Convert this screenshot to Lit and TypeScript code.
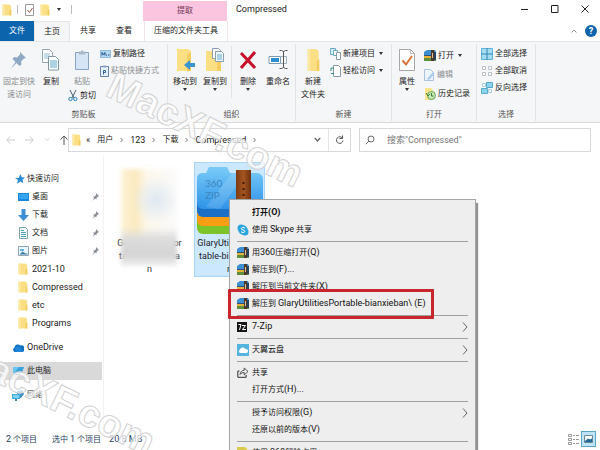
import { LitElement, html, svg, css, TemplateResult } from "lit";
import { customElement } from "lit/decorators.js";
import { classMap } from "lit/directives/class-map.js";

/* Latin runs are set one size larger than the Chinese characters around them. */
const mix = (text: string) =>
  text
    .split(/([\x21-\x7e]+(?: [\x21-\x7e]+)*)/)
    .map((part) => (/^[\x21-\x7e]/.test(part) ? html`<span class="en">${part}</span>` : part));

const icon = (w: number, h: number, body: unknown) =>
  html`<svg width=${w} height=${h} viewBox="0 0 ${w} ${h}" aria-hidden="true">${body}</svg>`;

const folder = (w: number, h: number) => html`<svg width=${w} height=${h} viewBox="0 0 10 12" preserveAspectRatio="none" aria-hidden="true">
  <path d="M0.5 0.5h6.5l2 1v10h-8.5z" fill="#fbdf85" />
  <path d="M7.5 6.5l2-1v6h-2z" fill="#f3cd62" />
  <path d="M0.5 0.5h2v11h-2z" fill="#fde9a6" />
</svg>`;

const I = {
  doc: () => icon(10, 12, svg`<path d="M.5.5h8v11h-8z" fill="#fff" stroke="#9a9a9a"/><path d="M2.5 6l2 2.500 3-4.500" fill="none" stroke="#a9573f"/>`),
  pin: () => icon(20, 22, svg`<path d="M11 3l6 6-2 .5-3 3 .5 3-2 1.500-3-3-6 6 5-7-3-3 1.500-2 3 .5 3-3z" fill="#8fa9c4"/>`),
  copy: () => icon(18, 22, svg`<path d="M.5.5h7l3 3v10h-10z" fill="#fff" stroke="#93a9b5"/><path d="M2 5h6M2 7h6M2 9h5" stroke="#8fc0d6"/><path d="M6.500 7.500h7l3 3v10.500h-10z" fill="#fff" stroke="#7f98a6"/><path d="M8 12h7M8 14h7M8 16h7M8 18h7" stroke="#5ba9cb"/>`),
  paste: () => icon(16, 22, svg`<path d="M1.500 3.500h13v17h-13z" fill="#d6e5f5" stroke="#88a3c4"/><path d="M5 2.500h2l1-2 1 2h2v3h-6z" fill="#a9b7c8"/>`),
  cut: () => icon(10, 12, svg`<path d="M2 0l4 8M8 0L4 8" stroke="#4b5f72"/><circle cx="2.500" cy="9" r="1.700" fill="none" stroke="#2b85bd"/><circle cx="7.300" cy="9" r="1.700" fill="none" stroke="#2b85bd"/>`),
  path: () => icon(11, 8, svg`<path d="M.5.5h10v7h-10z" fill="#b7daf3" stroke="#8fbbdd"/><path d="M2 5.500v-3l1.500 2 1.500-2v3M6 5h1M8 5h1.500" stroke="#1d4f84" fill="none"/>`),
  shortcut: () => icon(9, 12, svg`<path d="M.5 1.500h8v10h-8z" fill="#e7f0fa" stroke="#6586b0"/><path d="M3 .5h3v2H3z" fill="#8fa4c0"/><path d="M3.500 9.500V5.500h2v2h-2" fill="none" stroke="#2f66a8"/>`),
  move: () => icon(20, 24, svg`<path d="M2 1h11l3 2v20H2z" fill="#fbdf85"/><path d="M12 6l4-2v19h-4z" fill="#f3cd62"/><path d="M9 17l6-5v3h5v4h-5v3z" fill="#3b93cf"/>`),
  copyTo: () => icon(20, 24, svg`<path d="M1 3h12l3 2v18H1z" fill="#fbdf85"/><path d="M12 8l4-2v17h-4z" fill="#f3cd62"/><path d="M7.500.5h6l2 2v8h-8z" fill="#fff" stroke="#8a9fae"/><path d="M10.500 3.500h6l2 2v8h-8z" fill="#eef6fb" stroke="#8a9fae"/><path d="M12 7h5M12 9h5M12 11h5" stroke="#68add0"/>`),
  del: () => icon(18, 20, svg`<path d="M2 3l14 15M16 2L2 18" stroke="#c8102a" stroke-width="3" fill="none"/>`),
  rename: () => icon(20, 20, svg`<path d="M1 6.500h11.500v7H1z" fill="#fff" stroke="#7f9bb0"/><path d="M3 8h8v4H3z" fill="#2f8fd0"/><path d="M12 6.500h6.500v7H12" fill="none" stroke="#9db2c0"/><path d="M11.500.500h2l2 1 2-1h2M11.500 18.500h2l2-1 2 1h2M15.500 1.500v16" fill="none" stroke="#555"/>`),
  newItem: () => icon(11, 12, svg`<path d="M.5.5h5v6h-5z" fill="#d4effa" stroke="#6ba6bf"/><path d="M3.500 2.500h4v5h-4z" fill="#fff" stroke="#6ba6bf"/><path d="M6.500 4.500h4v7h-4z" fill="#fff" stroke="#8a9aa5"/>`),
  easy: () => icon(11, 12, svg`<path d="M3.500.5h5l2 2v9h-7z" fill="#fff" stroke="#8a9aa5"/><path d="M1 6V3h3" fill="none" stroke="#338f86"/><path d="M1 8.500h3" stroke="#338f86"/>`),
  props: () => icon(16, 22, svg`<path d="M.5.5h11l4 4v17H.5z" fill="#fff" stroke="#a7a7a7"/><path d="M11.500.5v4h4" fill="none" stroke="#b7b7b7"/><path d="M3.500 11.500l3.500 4 6-8.500" fill="none" stroke="#d9743a" stroke-width="2"/>`),
  zip: () => icon(12, 11, svg`<path d="M0 2l3-2h8l1 2v4H0z" fill="#3c8fd0"/><path d="M0 5h12v2H0z" fill="#2b527c"/><path d="M0 6h12v3H0z" fill="#e7b23a"/><path d="M0 8h12v3H0z" fill="#5f8f3c"/><path d="M7 0h3v11H7z" fill="#4d3a2c"/><path d="M8 3h1v5H8z" fill="#d9c39a"/><path d="M10 2h2v8h-2z" fill="#27445f"/>`),
  edit: () => icon(11, 12, svg`<path d="M.5.5h6l3 3v8h-9z" fill="#eef4fb" stroke="#a9c3dc"/><path d="M3 10l6-7 1.500 1.500L5 11z" fill="#a8c9ea"/>`),
  history: () => icon(12, 12, svg`<path d="M1 0h6l2 2v10H1z" fill="#f7e38b"/><circle cx="7.500" cy="7.500" r="4" fill="#c9e7bd" stroke="#63a551"/><path d="M7.500 5v3h2M2 5l2 3 2-2" fill="none" stroke="#3d7f32"/>`),
  selAll: () => icon(12, 12, svg`<path d="M.5.5h11v11H.5z" fill="#a5dcf3" stroke="#5db4d8"/><path d="M6 0v12M0 6h12" stroke="#3589b0"/>`),
  selNone: () => icon(12, 12, svg`<path d="M1.500 1.500h3v3h-3zM7.500 1.500h3v3h-3zM1.500 7.500h3v3h-3zM7.500 7.500h3v3h-3z" fill="#fff" stroke="#b9bfc4"/>`),
  selInv: () => icon(12, 12, svg`<path d="M1.500 1.500h3v3h-3zM7.500 7.500h3v3h-3z" fill="#fff" stroke="#a9cfe0"/><path d="M5.500.5h6v5h-6zM.5 6.500h6v5h-6z" fill="#8bd2ee" stroke="#5aabc9"/>`),
  star: () => icon(10, 10, svg`<path d="M5.500 0l1.300 3.200 3.200.3-2.500 2.200.8 3.600-3-1.800L2 9.800l1-3.700L0 4.200l3.800-.5z" fill="#2a8bd8"/>`),
  desktop: () => icon(11, 10, svg`<path d="M0 1h11v8H0z" fill="#1a86dc"/><path d="M1 2h9v5H1z" fill="#35a5f2"/>`),
  down: () => icon(11, 12, svg`<path d="M3.500 0h4v6H11L5.500 12 0 6h3.500z" fill="#3d8fd6"/>`),
  docs: () => icon(11, 12, svg`<path d="M1.500.5h6l2 2v9h-8z" fill="#f1f9fb" stroke="#7da4ad"/><path d="M3 3.500h3M3 5.500h5M3 7.500h5M3 9.500h5" stroke="#4f9fb5"/>`),
  pics: () => icon(11, 10, svg`<path d="M.5.5h10v9H.5z" fill="#e9f5fb" stroke="#8fa5b0"/><path d="M1.500 8.500l3-3 3 2h2v1z" fill="#3a7fa5"/><path d="M2 3h4v2H2z" fill="#66b2dc"/>`),
  cloud: () => icon(12, 9, svg`<path d="M2.500 9a2.500 2.500 0 0 1 0-4.500A3.500 3.500 0 0 1 8.500 2.500 3 3 0 0 1 10 9z" fill="#1272c8"/><path d="M4 9l-1-4 3-2 3 2 1 4z" fill="#2a9ae6" opacity=".5"/>`),
  pc: () => icon(12, 10, svg`<path d="M1 1h11l-2 6H1z" fill="#3aa3dd"/><path d="M1 1h6L2 7H1z" fill="#6cc4ef"/><path d="M3 8h5v1H3z" fill="#4d7f9d"/>`),
  net: () => icon(12, 11, svg`<path d="M5 1l5-1 2 4-3 4H5z" fill="#3d8fc4"/><path d="M0 4h8v5H0z" fill="#45aee3"/><path d="M1 5h6v3H1z" fill="#7ccff2"/><path d="M3 9h2v2H3z" fill="#4d7f9d"/>`),
  tack: () => icon(7, 8, svg`<path d="M4 0l3 3-1 .5-1.500 1.500v1.500L3 5.500.5 8l1.500-3L1 3.500h1.500L4 2z" fill="#8a9097"/>`),
  skype: () => icon(12, 12, svg`<circle cx="4" cy="4" r="3.500" fill="#2aa5de"/><circle cx="8" cy="8" r="3.500" fill="#2aa5de"/><circle cx="6" cy="6" r="4.700" fill="#2aa5de"/><path d="M8 4.300C7 3 4.200 3.300 4.300 4.700 4.400 6.300 7.800 5.600 7.800 7.300 7.700 8.900 5 8.900 4 7.600" fill="none" stroke="#fff"/>`),
  seven: () => icon(10, 10, svg`<path d="M0 0h10v10H0z" fill="#151515"/><path d="M1.500 2.500h2.500L2.500 8M5 3.500h3.500L5.500 7.500h3.500" fill="none" stroke="#fff"/>`),
  tianyi: () => icon(12, 12, svg`<path d="M0 0h12v12H0z" fill="#55b4dd"/><path d="M3 9a2 2 0 0 1 0-3.500 3 3 0 0 1 5.500-.5A2 2 0 0 1 9.500 9z" fill="#fff"/>`),
  share: () => icon(12, 11, svg`<path d="M2.500 4H.8v6.300h8.400V8" fill="none" stroke="#333"/><path d="M3 7.500C3.500 4.500 5 3.500 7.200 3.300V1l3.800 3.500L7.200 8V5.500C5.500 5.500 4 6 3 7.500z" fill="none" stroke="#333" stroke-width=".8"/>`),
  note: () => icon(11, 11, svg`<path d="M0 0h8l3 3v8H0z" fill="#d9cb4d"/><path d="M2 4h6v7H2z" fill="#f4f0c0"/>`),
  chev: () => icon(6, 10, svg`<path d="M1 .5L5 5 1 9.500" fill="none" stroke="#666"/>`),
  sep: () => icon(3, 6, svg`<path d="M.5 1l2 2-2 2" fill="none" stroke="#777"/>`),
  back: () => icon(9, 8, svg`<path d="M9 4H1M4 .5L.8 4 4 7.500" fill="none" stroke="#c4c8cc"/>`),
  fwd: () => icon(9, 8, svg`<path d="M0 4h8M5 .5L8.200 4 5 7.500" fill="none" stroke="#c4c8cc"/>`),
  up: () => icon(8, 10, svg`<path d="M4 10V1M.5 4.500L4 1l3.500 3.500" fill="none" stroke="#555"/>`),
  small: () => icon(6, 4, svg`<path d="M1 .5l2 2 2-2" fill="none" stroke="#c4c8cc"/>`),
  drop: () => icon(7, 6, svg`<path d="M.8 1l2.700 3L6.200 1" fill="none" stroke="#666" stroke-width="1.300"/>`),
  refresh: () => icon(9, 10, svg`<path d="M7.300 3A3.300 3.300 0 1 0 8 5.500M7.500.5v3h-3" fill="none" stroke="#555"/>`),
  search: () => icon(10, 10, svg`<circle cx="6" cy="4" r="3" fill="none" stroke="#666"/><path d="M3.800 6.200L.8 9.200" stroke="#666"/>`),
  list: () => icon(11, 11, svg`<path d="M.5.5h3v2h-3zM.5 4.500h3v2h-3zM.5 8.500h3v2h-3z" fill="#fff" stroke="#999"/><path d="M5 1.500h2M8 1.500h3M5 5.500h2M8 5.500h3M5 9.500h2M8 9.500h3" stroke="#999"/>`),
  large: () => icon(9, 8, svg`<path d="M.5.5h8v7h-8z" fill="#fff" stroke="#6a8797"/><path d="M1 6l3-2.500 2 1 2-1V7H1z" fill="#1f6b95"/>`),
};

const caret = html`<i class="caret"></i>`;

type Entry = { sep?: boolean; label?: string; icon?: () => TemplateResult; more?: boolean; bold?: boolean };

const MENU: Entry[] = [
  { label: "打开(O)", bold: true },
  { label: "使用 Skype 共享", icon: I.skype },
  { sep: true },
  { label: "用360压缩打开(Q)", icon: I.zip },
  { label: "解压到(F)...", icon: I.zip },
  { label: "解压到当前文件夹(X)", icon: I.zip },
  { label: "解压到 GlaryUtilitiesPortable-bianxieban\\ (E)", icon: I.zip },
  { sep: true },
  { label: "7-Zip", icon: I.seven, more: true },
  { sep: true },
  { label: "天翼云盘", icon: I.tianyi, more: true },
  { sep: true },
  { label: "共享", icon: I.share },
  { label: "打开方式(H)..." },
  { sep: true },
  { label: "授予访问权限(G)", more: true },
  { label: "还原以前的版本(V)" },
  { sep: true },
  { label: "使用 360解除占用", icon: I.note },
];

const base = css`
  * { box-sizing: border-box; }
  button, input {
    font: inherit; color: inherit; background: none; border: 0; padding: 0; margin: 0;
  }
  button { display: flex; align-items: center; white-space: nowrap; }
  svg { display: block; flex: none; }
  .en { font-size: 9px; }
  .caret {
    border: 2px solid transparent; border-top: 3px solid #333; border-bottom: 0; flex: none;
  }
`;

@customElement("ribbon-bar")
export class RibbonBar extends LitElement {
  static styles = [base, css`
    :host {
      display: flex; height: 82px; background: #f5f6f7;
      border-top: 1px solid #e3e5e7; border-bottom: 1px solid #dadbdc;
    }
    .group {
      display: flex; flex-direction: column; flex: none; margin: 2px 0 1px;
      border-right: 1px solid #e1e3e5;
    }
    .body { display: flex; flex: 1; }
    .name { text-align: center; height: 13px; line-height: 13px; color: #555; }
    .tall { flex-direction: column; width: 30px; padding-top: 4px; height: 62px; line-height: 13px; text-align: center; }
    .tall svg { height: 24px; }
    .tall .text { margin-top: 3px; }
    .dim { color: #8a8d91; }
    .wide { width: 34px; }
    .side { display: flex; flex-direction: column; align-items: center; width: 32px; }
    .side .tall { height: 46px; }
    .list { display: flex; flex-direction: column; padding: 1px 6px 0 2px; }
    .list button { height: 17px; gap: 2px; }
    .list .caret { margin-left: 2px; }
    .loose { padding-top: 2px; }
    .loose button { height: 19px; }
    .cut { gap: 2px; height: 12px; }
    .rule { width: 1px; height: 52px; margin: 2px 1px 0; background: #e1e3e5; }
    .pad { padding: 0 2px; }
  `];

  private tall(ic: unknown, text: unknown, cls = "", arrow = false) {
    return html`<button class="tall ${cls}">${ic}<span class="text">${text}</span>${arrow ? caret : ""}</button>`;
  }

  private row(ic: unknown, text: string, arrow = false, dim = false) {
    return html`<button class=${classMap({ dim })}>${ic}<span>${text}</span>${arrow ? caret : ""}</button>`;
  }

  render() {
    return html`
      <section class="group">
        <div class="body pad">
          ${this.tall(I.pin(), html`固定到快<br />速访问`, "dim wide")}
          ${this.tall(I.copy(), "复制")}
          <div class="side">
            ${this.tall(I.paste(), "粘贴", "dim")}
            <button class="cut">${I.cut()}<span>剪切</span></button>
          </div>
          <div class="list">
            ${this.row(I.path(), "复制路径")}
            ${this.row(I.shortcut(), "粘贴快捷方式", false, true)}
          </div>
        </div>
        <div class="name">剪贴板</div>
      </section>
      <section class="group">
        <div class="body pad">
          ${this.tall(I.move(), "移动到", "", true)}
          ${this.tall(I.copyTo(), "复制到", "", true)}
          <div class="rule"></div>
          ${this.tall(I.del(), "删除", "", true)}
          ${this.tall(I.rename(), "重命名")}
        </div>
        <div class="name">组织</div>
      </section>
      <section class="group">
        <div class="body pad">
          ${this.tall(folder(13, 20), html`新建<br />文件夹`)}
          <div class="list">
            ${this.row(I.newItem(), "新建项目", true)}
            ${this.row(I.easy(), "轻松访问", true)}
          </div>
        </div>
        <div class="name">新建</div>
      </section>
      <section class="group">
        <div class="body">
          ${this.tall(I.props(), "属性", "", true)}
          <div class="list loose">
            ${this.row(I.zip(), "打开", true)}
            ${this.row(I.edit(), "编辑", false, true)}
            ${this.row(I.history(), "历史记录")}
          </div>
        </div>
        <div class="name">打开</div>
      </section>
      <section class="group">
        <div class="body pad">
          <div class="list">
            ${this.row(I.selAll(), "全部选择")}
            ${this.row(I.selNone(), "全部取消")}
            ${this.row(I.selInv(), "反向选择")}
          </div>
        </div>
        <div class="name">选择</div>
      </section>
    `;
  }
}

@customElement("context-menu")
export class ContextMenu extends LitElement {
  static styles = [base, css`
    :host {
      display: block; padding: 4px 7px; background: #eee; border: 1px solid #a5a5a5;
      box-shadow: 2px 4px 1px #0000006b; color: #111;
    }
    .item { width: 100%; height: 17px; }
    .icon { width: 15px; }
    .text { flex: 1; text-align: left; }
    .bold { font-weight: 700; }
    hr { height: 1px; border: 0; background: #a0a0a0; margin: 3px 0 2px; }
  `];

  render() {
    return MENU.map((e) =>
      e.sep
        ? html`<hr />`
        : html`<button class="item" role="menuitem">
            <span class="icon">${e.icon ? e.icon() : ""}</span>
            <span class="text ${classMap({ bold: !!e.bold })}">${mix(e.label!)}</span>
            ${e.more ? I.chev() : ""}
          </button>`
    );
  }
}

@customElement("app-root")
export class AppRoot extends LitElement {
  static styles = [base, css`
    :host {
      display: flex; flex-direction: column; position: relative; min-height: 100vh; height: 100vh;
      overflow: hidden; background: #fff; color: #222;
      font: 8px/12px Roboto, "Noto Sans CJK SC", sans-serif;
    }
    .title { display: flex; height: 21px; flex: none; }
    .quick { display: flex; align-items: center; width: 143px; padding: 0 2px 2px; }
    .quick .gap { width: 1px; height: 9px; background: #bbb; margin: 0 7px 0 5px; }
    .quick .caret { margin: 0 5px 0 7px; }
    .quick button + button { margin-left: 5px; }
    .extract { width: 84px; margin-top: 1px; background: #fcc5df; text-align: center; line-height: 20px; color: #6f3654; }
    .name { flex: 1; padding-left: 9px; line-height: 19px; font-size: 9px; font-weight: 400; margin: 0; }
    .win { display: flex; }
    .win button { width: 30px; justify-content: center; padding-bottom: 3px; }
    .tabs { display: flex; height: 20px; flex: none; align-items: stretch; }
    .tabs button { width: 36px; justify-content: center; }
    .tabs .file { width: 34px; background: #0c64ad; color: #fff; }
    .tabs .on { background: #f5f6f7; border: 1px solid #e3e5e7; border-bottom: 0; }
    .tabs .tool { width: 84px; margin-left: 2px; border: 1px solid #f1e4ea; border-width: 0 1px; }
    .tabs .right { display: flex; margin-left: auto; align-items: center; gap: 8px; padding-right: 3px; }
    .tabs .right button { width: auto; }
    .tabs .right .help { width: 12px; height: 12px; border-radius: 50%; background: #1164ab; color: #fff; font-size: 9px; font-weight: 700; }
    .bar { display: flex; flex: none; align-items: center; height: 33px; padding: 0 9px 0 6px; }
    .nav { display: flex; align-items: center; width: 62px; gap: 10px; }
    .address { display: flex; flex: 1; height: 24px; border: 1px solid #d9d9d9; align-items: center; padding-left: 3px; }
    .crumbs { display: flex; align-items: center; gap: 7px; flex: 1; padding-left: 5px; }
    .address .go { width: 22px; height: 22px; justify-content: center; border-left: 1px solid #e4e4e4; }
    .address .open { margin-right: 7px; }
    .find { display: flex; align-items: center; width: 232px; height: 24px; border: 1px solid #d9d9d9; margin-left: 8px; padding-left: 5px; gap: 12px; }
    .find input { flex: 1; min-width: 0; font-size: 9px; outline: 0; }
    .find input::placeholder { color: #777; opacity: 1; }
    .main { display: flex; flex: 1; min-height: 0; }
    .tree { width: 104px; padding-top: 14px; border-right: 1px solid #f3f3f3; flex: none; }
    .tree a { display: flex; align-items: center; height: 18px; padding-left: 15px; color: inherit; text-decoration: none; }
    .tree .icon { width: 12px; }
    .tree .sub { padding-left: 18px; }
    .tree .sub .icon { width: 14px; display: flex; justify-content: flex-start; }
    .tree .top { margin-top: 6px; padding-left: 12px; }
    .tree .top .icon { width: 15px; }
    .tree .here { background: #d9d9d9; margin-right: 1px; }
    .tree .text { flex: 1; }
    .tree .tack { margin-right: 4px; }
    .files { display: flex; align-items: flex-start; gap: 9px; padding: 6px 0 0 10px; }
    .file-item { display: flex; flex-direction: column; align-items: center; width: 71px; height: 115px; padding-top: 3px; position: relative; }
    .picked { background: #cce8ff; border: 1px solid #a9d6f8; }
    .thumb { height: 72px; }
    .caption { font-size: 9px; line-height: 13px; text-align: center; white-space: nowrap; }
    .smudge {
      position: absolute; left: 7px; top: 7px; width: 56px; height: 97px; filter: blur(2px);
      background:
        linear-gradient(#fff0 60%, #dcdcdc 72%, #d4d4d4 88%, #efefef),
        radial-gradient(circle at 62% 32%, #dde8f2, #fff0 32%),
        linear-gradient(90deg, #fdf3d8, #fbe9be 26%, #fdf8ec 46%, #fafafa);
    }
    .status { display: flex; flex: none; align-items: center; height: 18px; padding: 0 4px 4px 6px; color: #27405a; gap: 15px; }
    .chosen { display: flex; gap: 8px; }
    .views { display: flex; align-items: center; margin-left: auto; gap: 2px; }
    .views .on { width: 15px; height: 16px; justify-content: center; background: #bfe4f5; border: 1px solid #5ba4c4; }
    .menu { position: absolute; left: 229px; top: 199px; width: 247px; }
    .frame { position: absolute; left: 228px; top: 289px; width: 206px; height: 30px; border: 3px solid #c9252f; border-radius: 1px; }
    .mark { position: absolute; left: 0; top: 0; pointer-events: none; }
    .mark text { font: 700 39px "Liberation Sans", sans-serif; fill: #ffffffb8; stroke: #d2d2d2; stroke-width: 1px; }
  `];

  private link(ic: unknown, text: string, cls: string, tack = false) {
    return html`<a href="#" class=${cls}><span class="icon">${ic}</span><span class="text">${mix(text)}</span>${
      tack ? html`<span class="tack">${I.tack()}</span>` : ""
    }</a>`;
  }

  private archive() {
    return icon(68, 70, svg`
      <defs>
        <linearGradient id="lid" x1="0" y1="0" x2="0" y2="1"><stop offset="0" stop-color="#7acbf8"/><stop offset="1" stop-color="#2e93e8"/></linearGradient>
        <linearGradient id="strap" x1="0" y1="0" x2="1" y2="0"><stop offset="0" stop-color="#7d3a14"/><stop offset=".5" stop-color="#a4551f"/><stop offset="1" stop-color="#6d3010"/></linearGradient>
      </defs>
      <path d="M1 44h66v18a6 6 0 0 1-6 6H7a6 6 0 0 1-6-6z" fill="#7cc42a"/>
      <path d="M1 40h66v20H7a6 6 0 0 1-6-6z" fill="#fb9e14"/>
      <path d="M1 34h66v17H7a6 6 0 0 1-6-6z" fill="#1b6fc4"/>
      <path d="M1 12a5 5 0 0 1 5-5h4l3-6h18l3 6h27a6 6 0 0 1 6 6v30H7a6 6 0 0 1-6-6z" fill="url(#lid)"/>
      <path d="M10 41L36 7h14L24 43z" fill="#fff" opacity=".14"/>
      <path d="M40 4h15v42H40z" fill="url(#strap)"/>
      <path d="M47.500 16v2M47.500 22v2M47.500 28v2" stroke="#3f1a07" stroke-width="2"/>
      <text x="9" y="21" font-family="Lato" font-size="10" fill="#3c86c0">360</text>
      <text x="9" y="33" font-family="Lato" font-size="10" fill="#3c86c0">ZIP</text>`);
  }

  render() {
    return html`
      <header class="title">
        <div class="quick">
          ${folder(10, 12)}<span class="gap"></span>
          <button aria-label="属性">${I.doc()}</button>
          <button aria-label="新建文件夹">${folder(10, 12)}</button>
          ${caret}<span class="gap"></span>
        </div>
        <div class="extract">提取</div>
        <h1 class="name">Compressed</h1>
        <div class="win">
          <button aria-label="最小化">${icon(8, 8, svg`<path d="M0 4.500h7" stroke="#222"/>`)}</button>
          <button aria-label="最大化">${icon(8, 8, svg`<path d="M.5.5h6.500v7h-6.500z" fill="none" stroke="#222"/>`)}</button>
          <button aria-label="关闭">${icon(8, 8, svg`<path d="M.5.5l7 7M7.500.5l-7 7" stroke="#222"/>`)}</button>
        </div>
      </header>
      <nav class="tabs">
        <button class="file">文件</button>
        <button class="on">主页</button>
        <button>共享</button>
        <button>查看</button>
        <button class="tool">压缩的文件夹工具</button>
        <div class="right">
          <button aria-label="折叠">${icon(6, 4, svg`<path d="M.5 3.500L3 1l2.500 2.500" fill="none" stroke="#999"/>`)}</button>
          <button class="help">?</button>
        </div>
      </nav>
      <ribbon-bar></ribbon-bar>
      <div class="bar">
        <div class="nav">
          <button aria-label="后退">${I.back()}</button>
          <button aria-label="前进">${I.fwd()}</button>
          ${I.small()}
          <button aria-label="上移">${I.up()}</button>
        </div>
        <div class="address">
          ${folder(9, 12)}
          <div class="crumbs">
            <span class="en">«</span><span>用户</span>${I.sep()}<span class="en">123</span>${I.sep()}<span>下载</span>${I.sep()}<span class="en">Compressed</span>${I.sep()}
          </div>
          <button class="open" aria-label="历史位置">${I.drop()}</button>
          <button class="go" aria-label="刷新">${I.refresh()}</button>
        </div>
        <label class="find">${I.search()}<input type="search" aria-label="搜索" placeholder='搜索"Compressed"' /></label>
      </div>
      <div class="main">
        <nav class="tree">
          ${this.link(I.star(), "快速访问", "")}
          ${this.link(I.desktop(), "桌面", "sub", true)}
          ${this.link(I.down(), "下载", "sub", true)}
          ${this.link(I.docs(), "文档", "sub", true)}
          ${this.link(I.pics(), "图片", "sub", true)}
          ${["2021-10", "Compressed", "etc", "Programs"].map((t) => this.link(folder(10, 12), t, "sub"))}
          ${this.link(I.cloud(), "OneDrive", "top")}
          ${this.link(I.pc(), "此电脑", "top here")}
          ${this.link(I.net(), "网络", "top")}
        </nav>
        <div class="files">
          <div class="file-item">
            <div class="thumb"></div>
            <div class="caption">GlaryUtilitiesPor<br />table-bianxieba<br />n</div>
            <div class="smudge"></div>
          </div>
          <div class="file-item picked">
            <div class="thumb">${this.archive()}</div>
            <div class="caption">GlaryUtilitiesPor<br />table-bianxieba<br />n</div>
          </div>
        </div>
      </div>
      <footer class="status">
        <span>${mix("2 个项目")}</span>
        <span class="chosen"><span>${mix("选中 1 个项目")}</span><span class="en">20.8 MB</span></span>
        <div class="views">
          <button aria-label="详细信息">${I.list()}</button>
          <button class="on" aria-label="大图标">${I.large()}</button>
        </div>
      </footer>
      <svg class="mark" width="330" height="450" viewBox="0 0 330 450" aria-hidden="true">
        <text transform="translate(104 95) rotate(26)">MacXF.com</text>
        <text transform="translate(-44 363) rotate(26)">MacXF.com</text>
      </svg>
      <context-menu class="menu" role="menu"></context-menu>
      <div class="frame"></div>
    `;
  }
}
